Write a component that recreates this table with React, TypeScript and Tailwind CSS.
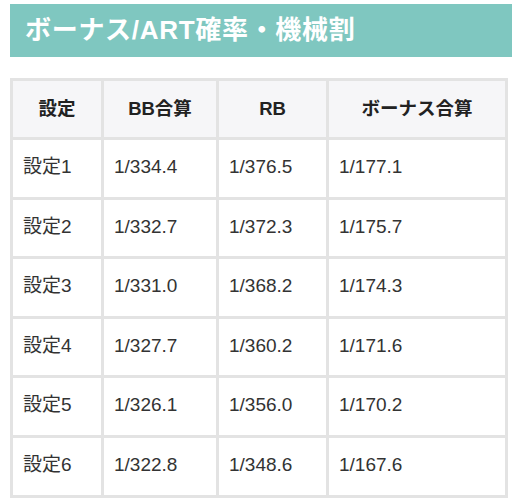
const rows = [
  ["設定1", "1/334.4", "1/376.5", "1/177.1"],
  ["設定2", "1/332.7", "1/372.3", "1/175.7"],
  ["設定3", "1/331.0", "1/368.2", "1/174.3"],
  ["設定4", "1/327.7", "1/360.2", "1/171.6"],
  ["設定5", "1/326.1", "1/356.0", "1/170.2"],
  ["設定6", "1/322.8", "1/348.6", "1/167.6"],
];

const headers = ["設定", "BB合算", "RB", "ボーナス合算"];

export default function App() {
  return (
    <div className="w-[512px] h-[501px] bg-white overflow-hidden pt-[4px] pl-[10px] font-['Liberation_Sans','Noto_Sans_CJK_JP',sans-serif]">
      <div className="h-[53px] bg-[#7fc7c0] flex items-center pl-[15px]">
        <h2 className="text-white font-bold text-[26px] tracking-[0.7px]">ボーナス/ART確率・機械割</h2>
      </div>
      <table className="mt-[21px] w-[495px] table-fixed border-collapse">
        <thead>
          <tr className="h-[59px]">
            {headers.map((h, i) => (
              <th
                key={h}
                className={
                  "border-[3px] border-[#e3e3e3] bg-[#f6f6f8] text-[#222] text-[18.5px] font-bold text-center " +
                  (i === 0 ? "w-[91px]" : i === 1 ? "w-[115px]" : i === 2 ? "w-[110px]" : "w-[179px]")
                }
              >
                {h}
              </th>
            ))}
          </tr>
        </thead>
        <tbody>
          {rows.map((r) => (
            <tr key={r[0]} className="h-[59.6px]">
              {r.map((c, i) => (
                <td key={i} className="border-[3px] border-[#e3e3e3] text-[#333] text-[19px] pl-[10px] pb-[2px]">
                  {c}
                </td>
              ))}
            </tr>
          ))}
        </tbody>
      </table>
    </div>
  );
}
